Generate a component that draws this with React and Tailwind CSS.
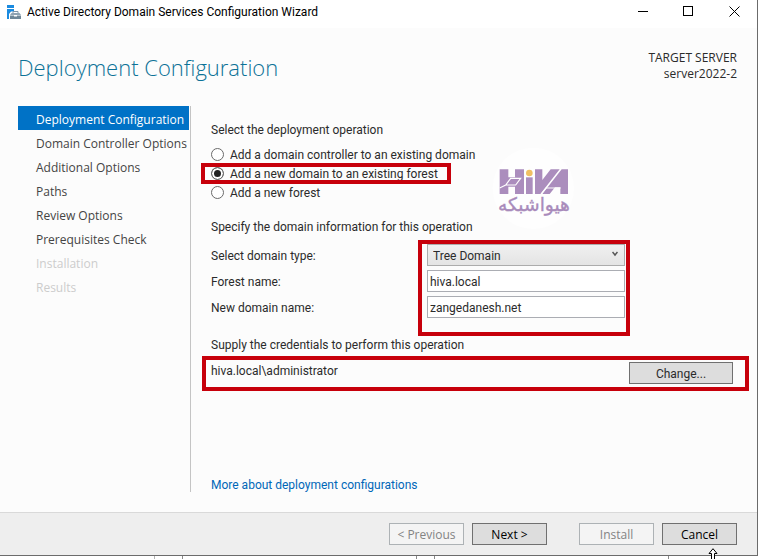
import { useState } from "react";

const steps = [
  { label: "Deployment Configuration", state: "active" },
  { label: "Domain Controller Options", state: "enabled" },
  { label: "Additional Options", state: "enabled" },
  { label: "Paths", state: "enabled" },
  { label: "Review Options", state: "enabled" },
  { label: "Prerequisites Check", state: "enabled" },
  { label: "Installation", state: "disabled" },
  { label: "Results", state: "disabled" },
];

const stepClasses = {
  active: "bg-[#0072c6] text-white",
  enabled: "text-[#444444]",
  disabled: "text-[#cccccc]",
};

const operations = [
  { id: "existing-domain", label: "Add a domain controller to an existing domain" },
  { id: "new-domain", label: "Add a new domain to an existing forest" },
  { id: "new-forest", label: "Add a new forest" },
];

function WizardIcon() {
  return (
    <svg width="15" height="15" viewBox="0 0 15 15" aria-hidden="true">
      <rect x="0" y="0" width="7" height="3" fill="#1b8be0" />
      <path d="M0 4h7v2.500H4L2 9v5H0z" fill="#1b8be0" />
      <path d="M6 8V6.500h5V8" fill="none" stroke="#7f95a8" />
      <path d="M4.500 8h8L14 10H3z" fill="#8fa3b3" />
      <path d="M3 10.500h4v1h3v-1h4V14H3z" fill="#6f8798" />
    </svg>
  );
}

function TitleBar() {
  return (
    <header className="flex h-7 items-center justify-between bg-white pl-[7px] text-black">
      <div className="flex items-center gap-[5px] pb-1">
        <WizardIcon />
        <span className="font-['Roboto',sans-serif] text-[12px] leading-4">
          Active Directory Domain Services Configuration Wizard
        </span>
      </div>
      <div className="flex pb-1.5">
        <button type="button" aria-label="Minimize" className="flex h-5 w-[46px] items-center justify-center">
          <svg width="11" height="11" viewBox="0 0 11 11" stroke="currentColor" fill="none">
            <path d="M1 5.500h10" />
          </svg>
        </button>
        <button type="button" aria-label="Maximize" className="flex h-5 w-[46px] items-center justify-center">
          <svg width="11" height="11" viewBox="0 0 11 11" stroke="currentColor" fill="none">
            <rect x="0.5" y="0.5" width="9" height="9" />
          </svg>
        </button>
        <button type="button" aria-label="Close" className="flex h-5 w-[46px] items-center justify-center">
          <svg width="11" height="11" viewBox="0 0 11 11" stroke="currentColor" fill="none">
            <path d="M0.500 0.500l10 10M10.500 0.500l-10 10" />
          </svg>
        </button>
      </div>
    </header>
  );
}

function HivaLogo() {
  return (
    <svg
      className="pointer-events-none absolute top-[39px] left-[299px]"
      width="87"
      height="87"
      viewBox="30 15 261 261"
      role="img"
      aria-label="Hiva"
    >
      <circle cx="160" cy="145" r="122" fill="#fefefe" />
      <g fill="#ab8dbd">
        <path d="M59 88h26v24h20V88h27v74h-27v-22H85v22H59z" />
        <rect x="138" y="112" width="20" height="50" />
        <path d="M165 88h22v32l25-32h27l-58 74h-16z" />
        <path d="M245 88h19v74h-23v-20h-16l-16 20h-22z" />
      </g>
      <path
        d="M59 144l18-9l15-20h30l-15 20H77M184 162l14-18h44"
        fill="none"
        stroke="#fefefe"
        strokeWidth="3.500"
      />
      <circle cx="148" cy="99" r="10" fill="#f0bf62" />
      <text
        x="162"
        y="214"
        textAnchor="middle"
        direction="rtl"
        className="fill-[#a98bbb] stroke-[#a98bbb] stroke-1 font-['DejaVu_Sans',sans-serif] text-[56px]"
      >
        هیواشبکه
      </text>
    </svg>
  );
}

// Red frame drawn around the part of the form that needs attention
function Highlight({ className }) {
  return (
    <div className={`pointer-events-none absolute border-4 border-[#c7000b] ${className}`} />
  );
}

function Sidebar() {
  return (
    <nav className="w-[173px] shrink-0 border-r border-[#c4c4c4]">
      <ul className="pr-px">
        {steps.map((step) => (
          <li
            key={step.label}
            className={`flex h-6 items-center pt-[3px] pl-[18px] text-[12px] whitespace-nowrap ${stepClasses[step.state]}`}
          >
            {step.label}
          </li>
        ))}
      </ul>
    </nav>
  );
}

function DeploymentForm() {
  const [operation, setOperation] = useState("new-domain");
  const [domainType, setDomainType] = useState("tree");
  const [forestName, setForestName] = useState("hiva.local");
  const [domainName, setDomainName] = useState("zangedanesh.net");

  return (
    <main className="relative flex grow flex-col pt-[15px] pl-5 font-['Roboto',sans-serif] text-[12px] leading-[18px] text-[#2b2b2b]">
      <fieldset>
        <legend>Select the deployment operation</legend>
        <div className="mt-1.5">
          {operations.map((op) => (
            <div key={op.id} className="relative">
              <label className="flex h-[19px] items-center gap-1.5">
                <input
                  type="radio"
                  name="operation"
                  value={op.id}
                  checked={operation === op.id}
                  onChange={() => setOperation(op.id)}
                  className="size-[13px] appearance-none rounded-full border border-[#6a6a6a] bg-white checked:bg-[#222222] checked:shadow-[inset_0_0_0_2px_white]"
                />
                {op.label}
              </label>
              {op.id === "new-domain" && (
                <Highlight className="-top-px -left-2.5 h-[21px] w-[250px]" />
              )}
            </div>
          ))}
        </div>
      </fieldset>

      <h2 className="mt-4">Specify the domain information for this operation</h2>
      <div className="relative mt-2 grid w-[414px] grid-cols-[216px_198px] items-center gap-y-1">
        <label htmlFor="domain-type" className="pt-0.5">Select domain type:</label>
        <div className="relative">
          <select
            id="domain-type"
            value={domainType}
            onChange={(e) => setDomainType(e.target.value)}
            className="block h-[22px] w-full appearance-none border border-[#acacac] bg-linear-to-b from-[#f0f0f0] to-[#e4e4e4] pt-0.5 pl-[5px]"
          >
            <option value="tree">Tree Domain</option>
            <option value="child">Child Domain</option>
          </select>
          <svg
            className="pointer-events-none absolute top-[7px] right-[7px]"
            width="6"
            height="6"
            viewBox="0 0 6 6"
            fill="none"
            stroke="#555555"
            strokeWidth="1.5"
          >
            <path d="M0.500 1L3 4L5.500 1" />
          </svg>
        </div>
        <label htmlFor="forest-name" className="pt-0.5">Forest name:</label>
        <input
          id="forest-name"
          type="text"
          value={forestName}
          onChange={(e) => setForestName(e.target.value)}
          className="h-[22px] w-full border border-[#abadb3] bg-white px-0.5 pt-0.5"
        />
        <label htmlFor="domain-name" className="pt-0.5">New domain name:</label>
        <input
          id="domain-name"
          type="text"
          value={domainName}
          onChange={(e) => setDomainName(e.target.value)}
          className="h-[22px] w-full border border-[#abadb3] bg-white px-0.5 pt-0.5"
        />
        <Highlight className="-top-1 -right-[5px] h-24 w-[212px]" />
      </div>

      <h2 className="mt-[18px]">Supply the credentials to perform this operation</h2>
      <div className="relative mt-2 flex items-start justify-between pr-6">
        <span>hiva.local\administrator</span>
        <button type="button" className="h-[22px] w-[104px] border border-[#707070] bg-[#dddddd] pt-0.5">
          Change...
        </button>
        <Highlight className="-top-1.5 right-2 -bottom-[7px] -left-[9px]" />
      </div>

      <a href="#more" className="mt-auto self-start leading-[14px] text-[#0067b8]">
        More about deployment configurations
      </a>
      <HivaLogo />
    </main>
  );
}

function Footer() {
  const enabled = "h-[22px] w-[75px] border border-[#707070] bg-[#dddddd] pt-0.5 text-black";
  const disabled = "h-[22px] w-[75px] border border-[#adb2b5] bg-[#f4f4f4] pt-0.5 text-[#838383]";

  return (
    <footer className="flex justify-end gap-8 border-t border-[#d9d9d9] bg-[#eeeeee] py-2.5 pr-5 text-[12px]">
      <div className="flex gap-2">
        <button type="button" disabled className={disabled}>
          &lt; Previous
        </button>
        <button type="button" className={enabled}>
          Next &gt;
        </button>
      </div>
      <div className="flex gap-2">
        <button type="button" disabled className={disabled}>
          Install
        </button>
        <button type="button" className={enabled}>
          Cancel
        </button>
      </div>
    </footer>
  );
}

function App() {
  return (
    <div className="relative flex min-h-screen flex-col overflow-hidden bg-white font-['Open_Sans','Noto_Sans',sans-serif]">
      <div className="flex grow flex-col border-r border-b border-[#6b6b6b] bg-[#fcfcfc]">
        <TitleBar />
        <div className="flex items-start justify-between pt-[22px] pr-5 pl-[18px]">
          <h1 className="text-[22px] leading-[34px] font-light text-[#0c7297]">
            Deployment Configuration
          </h1>
          <div className="flex flex-col items-end text-[12px] leading-4 text-[#2b2b2b]">
            <span>TARGET SERVER</span>
            <span>server2022-2</span>
          </div>
        </div>
        <div className="mt-[22px] mb-5 flex grow pl-[18px]">
          <Sidebar />
          <DeploymentForm />
        </div>
        <Footer />
      </div>

      {/* edge of the window behind the wizard */}
      <div className="flex h-[3px]">
        <div className="w-[155px] border-r border-[#b5b5b5]" />
        <div className="w-7 border-r border-[#8a8a8a]" />
        <div className="w-[234px] border-r border-[#8a8a8a]" />
        <div className="w-[18px] border-r border-[#8a8a8a]" />
        <div className="w-[234px] border-r border-[#8a8a8a]" />
      </div>

      <svg
        className="pointer-events-none absolute right-10 bottom-0"
        width="10"
        height="11"
        viewBox="0 0 10 11"
        fill="#ffffff"
        stroke="#000000"
        aria-hidden="true"
      >
        <path d="M5 0.700L9 5.500H6.500V12H3.500V5.500H1z" />
      </svg>
    </div>
  );
}

export default App;
